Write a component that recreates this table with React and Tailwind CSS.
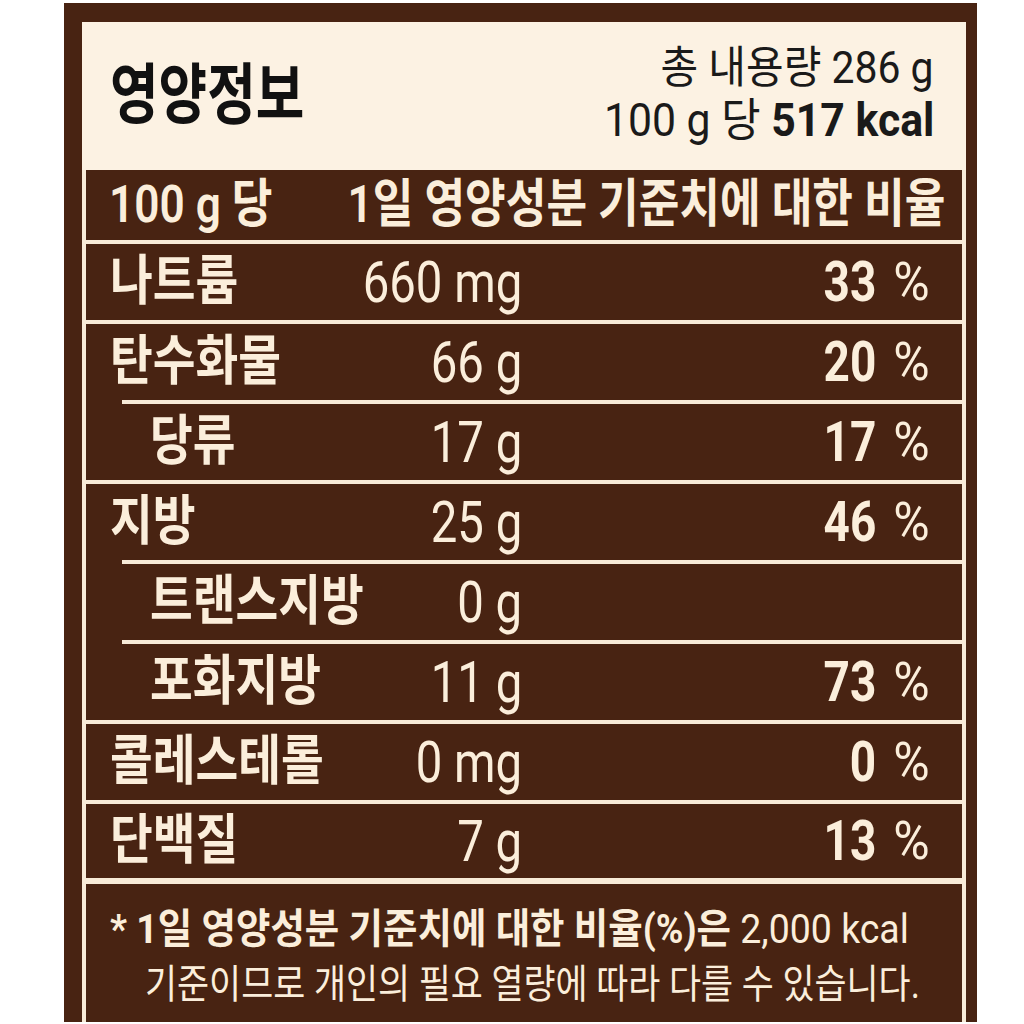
import React from "react";

const FONT = { fontFamily: 'Roboto, "Noto Sans CJK KR", sans-serif' };

function Sep({ indent, thick }) {
  return (
    <div
      className={
        indent
          ? "ml-[36px] h-[4px] bg-[#f8ebd8]"
          : thick
          ? "h-[6px] bg-[#f8ebd8]"
          : "h-[4px] bg-[#f8ebd8]"
      }
    />
  );
}

function Row({ label, amount, pct, sub, short }) {
  return (
    <div className={short ? "flex h-[74px] items-center" : "flex h-[76px] items-center"}>
      <div
        className={
          sub
            ? "flex w-[436px] shrink-0 items-center justify-between pl-[64px]"
            : "flex w-[436px] shrink-0 items-center justify-between pl-[24px]"
        }
      >
        <span className="inline-block origin-left scale-x-[0.86] whitespace-nowrap text-[54px] font-bold leading-none">
          {label}
        </span>
        <span className="inline-block origin-right scale-x-[0.83] whitespace-nowrap text-[57px] font-normal leading-none">
          {amount}
        </span>
      </div>
      <div className="flex flex-1 items-center justify-end pr-[32px]">
        {pct ? (
          <span className="flex items-center">
            <span className="inline-block origin-right scale-x-[0.82] whitespace-nowrap text-[56px] font-bold leading-none">
              {pct}
            </span>
            <span className="ml-[14px] inline-block origin-right scale-x-[0.92] whitespace-nowrap text-[54px] font-normal leading-none">
              %
            </span>
          </span>
        ) : null}
      </div>
    </div>
  );
}

export default function App() {
  return (
    <div className="h-[1024px] w-[1024px] overflow-hidden bg-white pt-[3px]" style={FONT}>
      <div className="ml-[64px] h-[1019px] w-[913px] overflow-hidden bg-[#482312] pl-[18px] pr-[11px] pt-[19px]">
        <div className="flex h-[1000px] flex-col bg-[#f8ebd8]">
          {/* Header */}
          <div className="flex h-[148px] shrink-0 items-center justify-between bg-[#fcf2e3] pl-[28px] pr-[32px]">
            <span className="inline-block origin-left scale-x-[0.8] whitespace-nowrap text-[66px] font-bold leading-none text-[#111111]">
              영양정보
            </span>
            <div className="flex flex-col items-end pb-[4px] text-[#1a1a1a]">
              <span className="inline-block origin-right scale-x-[0.93] whitespace-nowrap text-[44px] font-normal leading-[52px]">
                총 내용량 286 g
              </span>
              <span className="inline-block origin-right scale-x-[0.93] whitespace-nowrap text-[46px] font-normal leading-[52px]">
                100 g 당 <span className="font-bold">517 kcal</span>
              </span>
            </div>
          </div>

          {/* Table */}
          <div className="flex flex-1 flex-col px-[4px]">
            <div className="flex flex-1 flex-col bg-[#482312] text-[#fbeedb]">
              <div className="flex h-[70px] shrink-0 items-center pl-[23px] pr-[17px]">
                <span className="inline-block shrink-0 origin-left scale-x-[0.85] whitespace-nowrap text-[52px] font-semibold leading-none">
                  100 g 당
                </span>
                <div className="flex min-w-0 flex-1 justify-end">
                  <span className="inline-block shrink-0 origin-right scale-x-[0.85] whitespace-nowrap text-[52px] font-semibold leading-none">
                    1일 영양성분 기준치에 대한 비율
                  </span>
                </div>
              </div>
              <Sep />
              <Row label="나트륨" amount="660 mg" pct="33" />
              <Sep />
              <Row label="탄수화물" amount="66 g" pct="20" />
              <Sep indent />
              <Row label="당류" amount="17 g" pct="17" sub />
              <Sep />
              <Row label="지방" amount="25 g" pct="46" />
              <Sep indent />
              <Row label="트랜스지방" amount="0 g" sub />
              <Sep indent />
              <Row label="포화지방" amount="11 g" pct="73" sub />
              <Sep />
              <Row label="콜레스테롤" amount="0 mg" pct="0" />
              <Sep />
              <Row label="단백질" amount="7 g" pct="13" short />
              <Sep thick />
              <div className="flex flex-col pl-[24px] pt-[16px]">
                <div className="whitespace-nowrap">
                  <span className="inline-block origin-left scale-x-[0.913] whitespace-nowrap text-[41px] leading-[58px]">
                    <span className="font-bold">* 1일 영양성분 기준치에 대한 비율(%)은</span>{" "}
                    <span className="font-normal">2,000 kcal</span>
                  </span>
                </div>
                <div className="whitespace-nowrap pl-[35px]">
                  <span className="inline-block origin-left scale-x-[0.871] whitespace-nowrap text-[40px] font-normal leading-[54px]">
                    기준이므로 개인의 필요 열량에 따라 다를 수 있습니다.
                  </span>
                </div>
              </div>
            </div>
          </div>
        </div>
      </div>
    </div>
  );
}
